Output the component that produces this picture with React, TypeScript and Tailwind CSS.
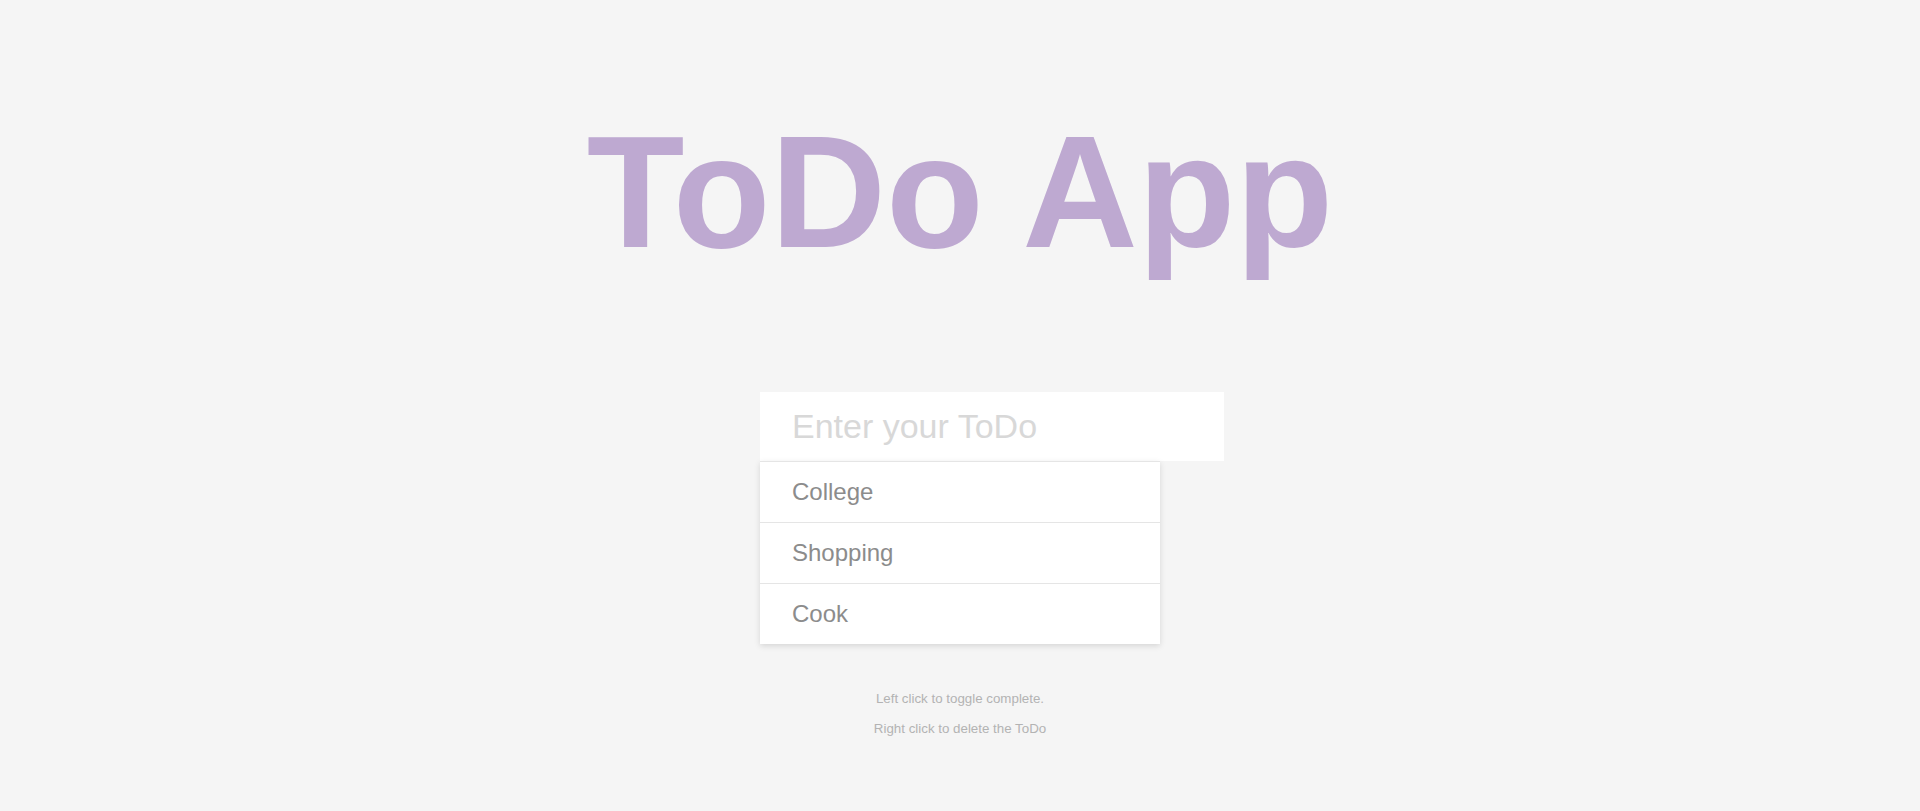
import { useState } from 'react'

type Todo = { id: number; text: string; done: boolean }

export default function App() {
  const [todos, setTodos] = useState<Todo[]>([
    { id: 1, text: 'College', done: false },
    { id: 2, text: 'Shopping', done: false },
    { id: 3, text: 'Cook', done: false },
  ])
  const [value, setValue] = useState('')

  const addTodo = (e: React.FormEvent) => {
    e.preventDefault()
    if (!value.trim()) return
    setTodos([...todos, { id: Date.now(), text: value.trim(), done: false }])
    setValue('')
  }

  return (
    <div className="min-h-[811px] bg-[#f5f5f5] font-['Liberation_Sans',Arial,sans-serif] flex flex-col items-center">
      <h1 className="mt-[112px] h-[160px] text-[160px] leading-none font-bold text-[#bea9d1] text-center">
        ToDo App
      </h1>

      <div className="mt-[120px] w-[400px]">
        <form onSubmit={addTodo}>
          <input
            value={value}
            onChange={(e) => setValue(e.target.value)}
            placeholder="Enter your ToDo"
            className="block w-[464px] h-[69px] bg-white pl-8 pr-8 text-[34px] text-[#555] placeholder:text-[#d8d8d8] outline-none border-0"
          />
        </form>
        {/* right click removes, left click toggles */}
        <ul className="bg-white shadow-[0_2px_6px_rgba(0,0,0,0.13)]">
          {todos.map((t) => (
            <li
              key={t.id}
              onClick={() => setTodos(todos.map((x) => (x.id === t.id ? { ...x, done: !x.done } : x)))}
              onContextMenu={(e) => {
                e.preventDefault()
                setTodos(todos.filter((x) => x.id !== t.id))
              }}
              className={`h-[61px] border-t border-[#e5e5e5] pl-8 flex items-center text-[24px] cursor-pointer select-none ${
                t.done ? 'text-[#d0d0d0] line-through' : 'text-[#8c8c8c]'
              }`}
            >
              {t.text}
            </li>
          ))}
        </ul>
      </div>

      <div className="mt-[40px] text-center text-[13.33px] leading-[30px] text-[#b3b3b3]">
        <p>Left click to toggle complete.</p>
        <p>Right click to delete the ToDo</p>
      </div>
    </div>
  )
}
